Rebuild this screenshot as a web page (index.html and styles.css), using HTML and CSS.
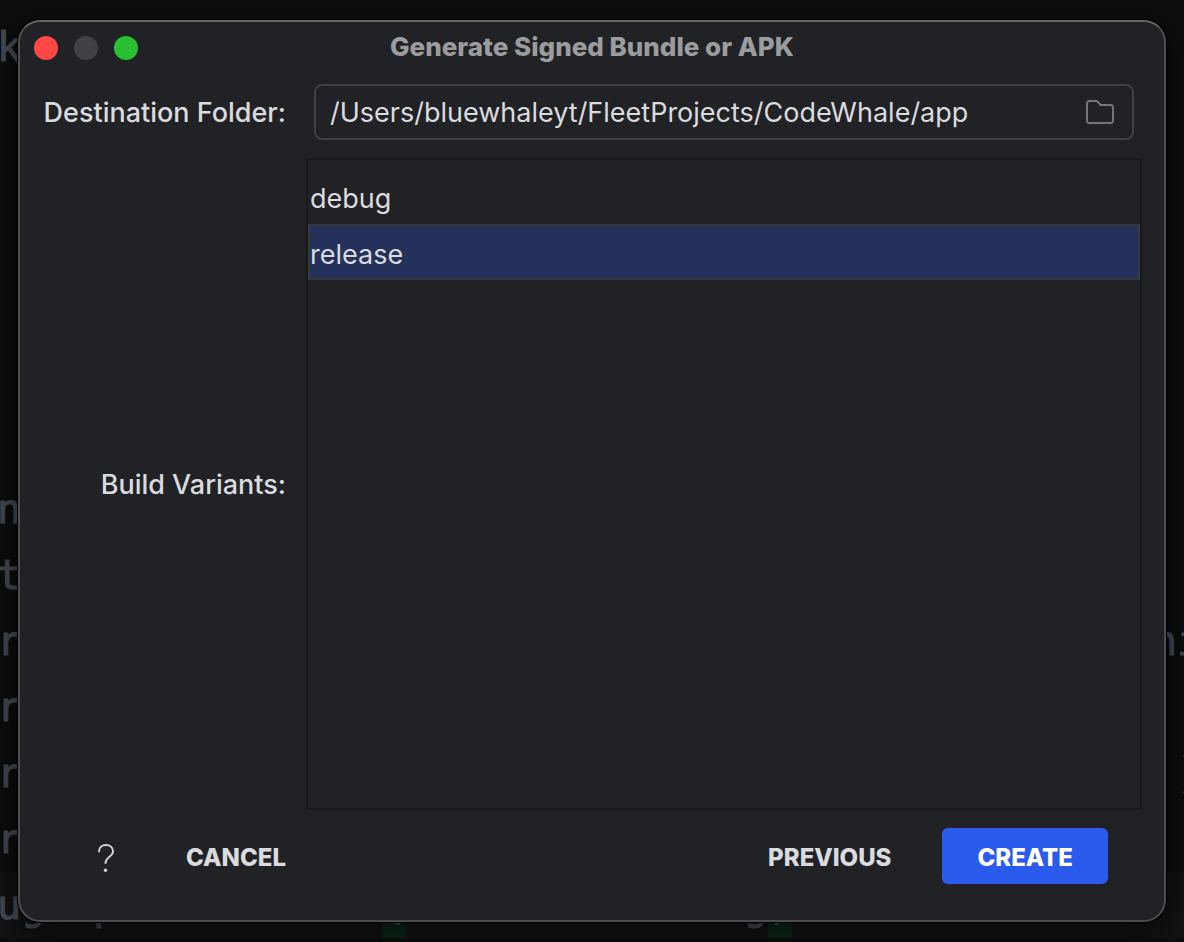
FILE: index.html
```html
<!DOCTYPE html>
<html lang="en">
<head>
<meta charset="utf-8">
<meta name="viewport" content="width=device-width, initial-scale=1">
<title>Generate Signed Bundle or APK</title>
<link rel="stylesheet" href="styles.css">
</head>
<body class="desktop">
<div class="editor" aria-hidden="true">
<pre class="code-line">k</pre>
<pre class="code-line"></pre>
<pre class="code-line"></pre>
<pre class="code-line"></pre>
<pre class="code-line"></pre>
<pre class="code-line"></pre>
<pre class="code-line"></pre>
<pre class="code-line">n</pre>
<pre class="code-line">t</pre>
<pre class="code-line">r                                               ni</pre>
<pre class="code-line">r</pre>
<pre class="code-line">r                                                )</pre>
<pre class="code-line">r</pre>
<pre class="code-line code-line-current">ug  p           <span class="brace">(</span>              g<span class="brace">)</span></pre>
</div>
<main class="dialog" role="dialog" aria-labelledby="dialog-title">
  <header class="titlebar">
    <div class="lights">
      <button class="light light-close" type="button" aria-label="Close"></button>
      <button class="light light-minimize" type="button" aria-label="Minimize" disabled></button>
      <button class="light light-zoom" type="button" aria-label="Zoom"></button>
    </div>
    <h1 class="title" id="dialog-title">Generate Signed Bundle or APK</h1>
  </header>
  <form class="form" id="variant-form">
    <label class="label" for="destination">Destination Folder:</label>
    <div class="field">
      <input class="field-input" id="destination" type="text" value="/Users/bluewhaleyt/FleetProjects/CodeWhale/app">
      <button class="browse" type="button" aria-label="Browse">
        <svg width="28" height="24" viewBox="0 0 28 24" fill="none" stroke="#72777f" stroke-width="2" stroke-linejoin="round"><path d="M3.500 1H10Q11 1 11.700 1.700L14.500 5H24.500Q27 5 27 7.500V20.500Q27 23 24.500 23H3.500Q1 23 1 20.500V3.500Q1 1 3.500 1Z"/></svg>
      </button>
    </div>
    <label class="label" for="variants">Build Variants:</label>
    <select class="variants" id="variants" multiple>
      <option class="variant">debug</option>
      <option class="variant" selected>release</option>
    </select>
  </form>
  <footer class="footer">
    <button class="help" type="button" aria-label="Help">
      <svg width="20" height="30" viewBox="0 0 20 30" fill="none" stroke="#d0d2d6" stroke-width="2" stroke-linecap="round"><path d="M3 8.500C3 4.500 6 2 10 2S17 4.500 17 8.500C17 14 9.500 13.500 9.500 20"/><circle cx="9.500" cy="27.300" r="1.700" fill="#d0d2d6" stroke="none"/></svg>
    </button>
    <button class="button cancel" type="button">CANCEL</button>
    <button class="button previous" type="button">PREVIOUS</button>
    <button class="button create" type="submit" form="variant-form">CREATE</button>
  </footer>
</main>
</body>
</html>
```
FILE: styles.css
```css
* {
  box-sizing: border-box;
}

.desktop {
  display: flex;
  min-height: 100vh;
  margin: 0;
  padding: 20px 18px;
  background: #0d0f10;
  color: #dadbdf;
  font-family: Inter, "Liberation Sans", sans-serif;
  font-size: 27px;
}

/* Dimmed editor showing behind the dialog */
.editor {
  position: absolute;
  inset: 0;
  padding-top: 14px;
  overflow: hidden;
  color: #4c545c;
  -webkit-text-stroke: 1px #4c545c;
}

.code-line {
  height: 66px;
  margin: 0 -3px;
  font: 40px/66px "DejaVu Sans Mono", monospace;
}

.code-line-current {
  background: #131516;
}

.brace {
  display: inline-block;
  background: #0c2a18;
}

.dialog {
  position: relative;
  display: flex;
  flex: 1;
  flex-direction: column;
  border: 2px solid #4d4e50;
  border-top-color: #656668;
  border-radius: 22px;
  background: #212225;
  box-shadow: 0 0 0 1px #000, 0 8px 40px 8px rgba(0, 0, 0, 0.6);
}

.titlebar {
  display: grid;
  grid-template-columns: 1fr auto 1fr;
  align-items: center;
  height: 52px;
  padding: 0 14px;
}

.lights {
  display: flex;
  gap: 16px;
}

.light {
  width: 24px;
  height: 24px;
  padding: 0;
  border: 0;
  border-radius: 50%;
}

.light-close {
  background: #ff4846;
}

.light-minimize {
  background: #414244;
}

.light-zoom {
  background: #29c132;
}

.title {
  margin: 0;
  padding-bottom: 2px;
  color: #9b9c9e;
  font-size: 26px;
  font-weight: 800;
  line-height: 32px;
}

.form {
  display: grid;
  flex: 1;
  grid-template-columns: minmax(244px, auto) 1fr;
  grid-template-rows: auto 1fr;
  gap: 18px 20px;
  align-items: center;
  padding: 10px 22px 0;
}

.label {
  font-weight: 450;
  text-align: right;
  white-space: nowrap;
}

.field {
  display: flex;
  align-items: center;
  height: 56px;
  margin: 0 8px;
  padding: 0 18px 0 14px;
  border: 2px solid #3e4044;
  border-radius: 8px;
}

.field-input {
  flex: 1;
  min-width: 0;
  padding: 0;
  border: 0;
  outline: 0;
  background: transparent;
  color: inherit;
  font: inherit;
}

.browse {
  display: flex;
  padding: 0;
  border: 0;
  background: transparent;
}

.variants {
  align-self: stretch;
  width: 100%;
  height: 100%;
  padding: 8px 0;
  border: 2px solid #191a1c;
  border-radius: 0;
  outline: 0;
  background: #212225;
  color: inherit;
  font: inherit;
  appearance: none;
  overflow: hidden;
}

.variant {
  height: 56px;
  padding: 14px 2px 0;
}

.variant:checked {
  padding: 12px 0 0;
  border: 2px solid #37393c;
  background: #24325b linear-gradient(#24325b, #24325b);
  color: #dadbdf;
}

.footer {
  display: flex;
  align-items: center;
  padding: 18px 56px 36px 76px;
}

.help {
  display: flex;
  padding: 4px 0 0;
  border: 0;
  background: transparent;
}

.button {
  height: 56px;
  padding: 4px 35px 0;
  border: 0;
  border-radius: 6px;
  background: transparent;
  color: inherit;
  font: 800 24px/32px Inter, "Liberation Sans", sans-serif;
}

.cancel {
  margin-left: 35px;
}

.previous {
  margin-left: auto;
}

.create {
  margin-left: 16px;
  background: #2a5bec;
  color: #fff;
}
```
